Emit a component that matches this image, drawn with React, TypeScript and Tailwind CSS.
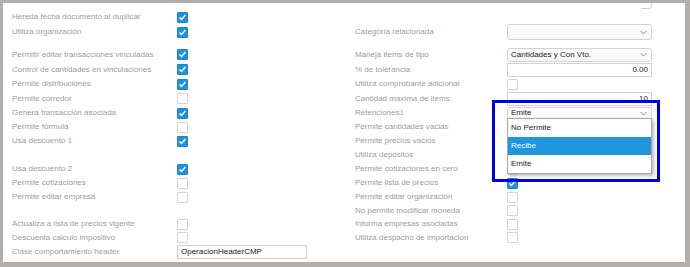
import React from "react";

type Ctrl =
  | { kind: "check"; on?: boolean }
  | { kind: "select"; value: string; h: string }
  | { kind: "input"; value: string; right?: boolean }
  | { kind: "none" };

type Row = {
  h: string;
  left?: string;
  leftCtrl?: Ctrl;
  right?: string;
  rightCtrl?: Ctrl;
  dropdown?: boolean;
};

const rows: Row[] = [
  { h: "h-[14px]", left: "Hereda fecha documento al duplicar", leftCtrl: { kind: "check", on: true } },
  {
    h: "h-[16px]",
    left: "Utiliza organización",
    leftCtrl: { kind: "check", on: true },
    right: "Categoría relacionada",
    rightCtrl: { kind: "select", value: "", h: "h-[16px]" },
  },
  { h: "h-[7px]" },
  {
    h: "h-[15px]",
    left: "Permitir editar transacciones vinculadas",
    leftCtrl: { kind: "check", on: true },
    right: "Maneja items de tipo",
    rightCtrl: { kind: "select", value: "Cantidades y Con Vto.", h: "h-[14px]" },
  },
  {
    h: "h-[15px]",
    left: "Control de cantidades en vinculaciones",
    leftCtrl: { kind: "check", on: true },
    right: "% de tolerancia",
    rightCtrl: { kind: "input", value: "0.00", right: true },
  },
  {
    h: "h-[14px]",
    left: "Permite distribuciones",
    leftCtrl: { kind: "check", on: true },
    right: "Utiliza comprobante adicional",
    rightCtrl: { kind: "check" },
  },
  {
    h: "h-[15px]",
    left: "Permite corredor",
    leftCtrl: { kind: "check" },
    right: "Cantidad maxima de items",
    rightCtrl: { kind: "input", value: "10", right: true },
  },
  {
    h: "h-[14px]",
    left: "Genera transacción asociada",
    leftCtrl: { kind: "check", on: true },
    right: "Retenciones1",
    rightCtrl: { kind: "select", value: "Emite", h: "h-[13px]" },
    dropdown: true,
  },
  {
    h: "h-[14px]",
    left: "Permite fórmula",
    leftCtrl: { kind: "check" },
    right: "Permite cantidades vacias",
    rightCtrl: { kind: "check" },
  },
  {
    h: "h-[14px]",
    left: "Usa descuento 1",
    leftCtrl: { kind: "check", on: true },
    right: "Permite precios vacios",
    rightCtrl: { kind: "check" },
  },
  { h: "h-[14px]", right: "Utiliza depositos", rightCtrl: { kind: "check" } },
  {
    h: "h-[14px]",
    left: "Usa descuento 2",
    leftCtrl: { kind: "check", on: true },
    right: "Permite cotizaciones en cero",
    rightCtrl: { kind: "check" },
  },
  {
    h: "h-[14px]",
    left: "Permite cotizaciones",
    leftCtrl: { kind: "check" },
    right: "Permite lista de precios",
    rightCtrl: { kind: "check", on: true },
  },
  {
    h: "h-[14px]",
    left: "Permite editar empresa",
    leftCtrl: { kind: "check" },
    right: "Permite editar organización",
    rightCtrl: { kind: "check" },
  },
  { h: "h-[13px]", right: "No permite modificar moneda", rightCtrl: { kind: "check" } },
  {
    h: "h-[14px]",
    left: "Actualiza a lista de precios vigente",
    leftCtrl: { kind: "check" },
    right: "Informa empresas asociadas",
    rightCtrl: { kind: "check" },
  },
  {
    h: "h-[13px]",
    left: "Descuenta calculo impositivo",
    leftCtrl: { kind: "check" },
    right: "Utiliza despacho de importacion",
    rightCtrl: { kind: "check" },
  },
  {
    h: "h-[15px]",
    left: "Clase comportamiento header",
    leftCtrl: { kind: "input", value: "OperacionHeaderCMP" },
  },
];

function Chevron() {
  return (
    <svg width="7" height="5" viewBox="0 0 7 5" className="shrink-0">
      <polyline points="0.5,1 3.5,4 6.5,1" fill="none" stroke="#5b9bd8" strokeWidth="1" />
    </svg>
  );
}

function Check({ on }: { on?: boolean }) {
  if (on) {
    return (
      <div className="flex h-[11px] w-[11px] items-center justify-center rounded-[1px] border border-[#1b86d0] bg-[#1d90e0]">
        <svg width="9" height="9" viewBox="0 0 9 9">
          <polyline points="1.5,4.5 3.5,6.5 7.5,2" fill="none" stroke="#fff" strokeWidth="1.4" />
        </svg>
      </div>
    );
  }
  return <div className="h-[11px] w-[11px] rounded-[1px] border border-[#d4d4d4] bg-white" />;
}

function Control({ c, wide }: { c?: Ctrl; wide?: boolean }) {
  if (!c || c.kind === "none") return null;
  if (c.kind === "check") return <Check on={c.on} />;
  if (c.kind === "select") {
    return (
      <div
        className={`flex ${c.h} w-[145px] items-center justify-between rounded-[3px] border border-[#d2d2d2] bg-gradient-to-b from-white to-[#f6f6f6] pl-[3px] pr-[4px] text-[8px] leading-none text-[#222]`}
      >
        <span>{c.value}</span>
        <Chevron />
      </div>
    );
  }
  return (
    <div
      className={`flex h-[14px] ${wide ? "w-[145px] justify-end pr-[3px]" : "w-[130px] pl-[3px]"} items-center border border-[#d2d2d2] bg-white text-[8px] leading-none text-[#222]`}
    >
      {c.value}
    </div>
  );
}

function Dropdown() {
  return (
    <div className="absolute left-0 top-[12px] z-10 w-[145px] border border-[#a8a8a8] bg-white text-[8px] leading-none text-[#222] shadow-[2px_2px_3px_rgba(0,0,0,0.25)]">
      <div className="flex h-[18px] items-center pl-[3px]">No Permite</div>
      <div className="flex h-[18px] items-center bg-[#1f95db] pl-[3px] text-white">Recibe</div>
      <div className="flex h-[18px] items-center pl-[3px]">Emite</div>
    </div>
  );
}

export default function App() {
  return (
    <div
      className="h-[267px] w-[690px] overflow-hidden bg-[#b2aeab] pb-[5px] pl-[3px] pr-[5px] pt-[3px]"
      style={{ fontFamily: '"Liberation Sans", Arial, sans-serif' }}
    >
      <div className="relative h-full w-full bg-white pl-[9px]">
        {/* partial element scrolled off the top */}
        <div className="grid h-[7px] grid-cols-[165px_178px_152px_145px]">
          <div />
          <div />
          <div />
          <div className="flex justify-end">
            <div className="h-[6px] w-[11px] rounded-br-[3px] border-b border-r border-[#d2d2d2]" />
          </div>
        </div>

        {rows.map((r, i) => (
          <div key={i} className={`grid ${r.h} grid-cols-[165px_178px_152px_145px] text-[8px] leading-none text-[#9c9c9c]`}>
            <div className="flex items-center whitespace-nowrap">{r.left}</div>
            <div className="flex items-center">
              <Control c={r.leftCtrl} />
            </div>
            <div className="flex items-center whitespace-nowrap">{r.right}</div>
            <div className="relative flex items-center">
              <Control c={r.rightCtrl} wide />
              {r.dropdown && <Dropdown />}
            </div>
          </div>
        ))}

        {/* highlight annotation */}
        <div className="pointer-events-none absolute left-[489px] top-[97px] z-20 h-[82px] w-[168px] border-[3px] border-[#0000e8]" />
      </div>
    </div>
  );
}
